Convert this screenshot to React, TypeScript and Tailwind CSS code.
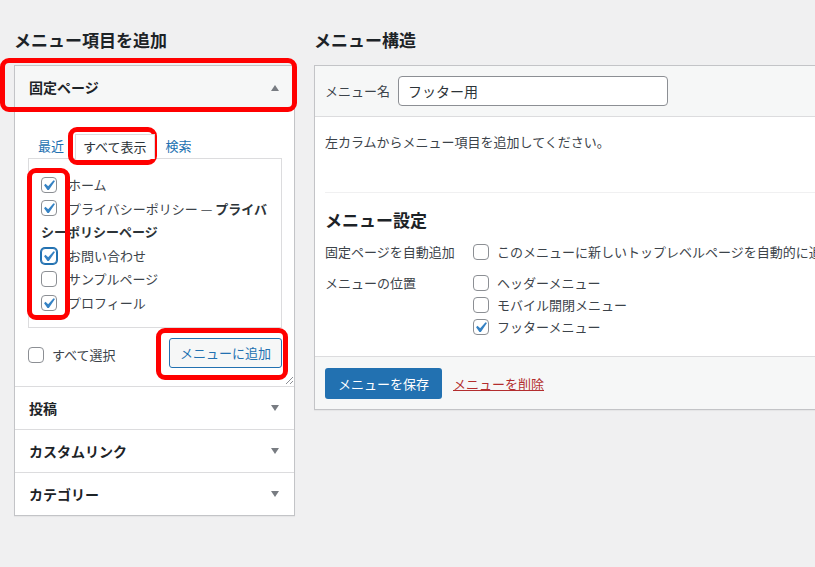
import type { ReactNode } from 'react'

function Check({ checked = false, focus = false }: { checked?: boolean; focus?: boolean }) {
  return (
    <span
      className={`relative inline-block h-4 w-4 shrink-0 rounded-[4px] border bg-white ${
        focus ? 'border-[#2271b1] shadow-[0_0_0_1px_#2271b1]' : 'border-[#8c8f94]'
      }`}
    >
      {checked ? (
        <svg viewBox="0 0 20 20" className="absolute -left-[4px] -top-[3px] h-[21px] w-[21px]" aria-hidden>
          <path d="M14.83 4.89l1.34.94-5.81 8.38H9.02L5.78 9.67l1.34-1.25 2.57 2.4z" fill="#3582c4" />
        </svg>
      ) : null}
    </span>
  )
}

function Arrow({ up = false }: { up?: boolean }) {
  return (
    <svg width="8" height="6" viewBox="0 0 8 6" aria-hidden>
      <path d={up ? 'M0 6 4 0 8 6z' : 'M0 0 8 0 4 6z'} fill="#787c82" />
    </svg>
  )
}

function Item({ checked, focus, children }: { checked?: boolean; focus?: boolean; children: ReactNode }) {
  return (
    <div className="flex h-[23.6px] items-center">
      <Check checked={checked} focus={focus} />
      <span className="ml-[11px] whitespace-nowrap">{children}</span>
    </div>
  )
}

function Section({ title }: { title: string }) {
  return (
    <div className="flex h-[43px] items-center justify-between border-t border-[#dcdcde] pl-[14px] pr-[15px]">
      <span className="text-[14px] font-semibold text-[#1d2327]">{title}</span>
      <Arrow />
    </div>
  )
}

function Mark({ className }: { className: string }) {
  return <div className={`pointer-events-none absolute rounded-[9px] border-[5px] border-[#ff0000] ${className}`} />
}

export default function App() {
  return (
    <div className="relative flex h-[567px] w-[815px] gap-[19px] overflow-hidden bg-[#f0f0f1] pl-[14px] font-['Noto_Sans_CJK_JP','Noto_Sans',sans-serif] text-[13px] text-[#3c434a]">
      {/* left column */}
      <div className="w-[281px] shrink-0">
        <h2 className="mt-[28px] h-[24px] text-[17px] font-bold leading-[24px] text-[#1d2327]">メニュー項目を追加</h2>
        <div className="mt-[13px] border border-[#c3c4c7] bg-white shadow-[0_1px_1px_rgba(0,0,0,0.04)]">
          <div className="flex h-[43px] items-center justify-between bg-[#f6f7f7] pl-[14px] pr-[15px]">
            <span className="text-[14px] font-semibold text-[#1d2327]">固定ページ</span>
            <Arrow up />
          </div>

          <div className="relative pb-[18px] pl-[13px] pr-[12px] pt-[25px]">
            <div className="flex h-[24px] items-end gap-[11px] pl-[10px] leading-[24px]">
              <span className="text-[#2271b1]">最近</span>
              <span className="relative z-10 -mb-px h-[25px] border border-b-0 border-[#dcdcde] bg-white px-[7px] text-[#2c3338]">
                すべて表示
              </span>
              <span className="text-[#2271b1]">検索</span>
            </div>

            <div className="h-[170px] border border-[#dcdcde] bg-white pl-[12px] pt-[14px]">
              <Item checked>ホーム</Item>
              <Item checked>
                プライバシーポリシー — <strong className="font-semibold text-[#2c3338]">プライバ</strong>
              </Item>
              <div className="flex h-[23.6px] items-center font-semibold text-[#2c3338]">シーポリシーページ</div>
              <Item checked focus>
                お問い合わせ
              </Item>
              <Item>サンプルページ</Item>
              <Item checked>プロフィール</Item>
            </div>

            <div className="mt-[10px] flex h-[30px] items-center justify-between">
              <label className="mt-[4px] flex items-center gap-[8px]">
                <Check />
                すべて選択
              </label>
              <button
                type="button"
                className="h-[30px] w-[113px] rounded-[3px] border border-[#2271b1] bg-[#f6f7f7] text-[13px] text-[#2271b1]"
              >
                メニューに追加
              </button>
            </div>

            <svg className="absolute bottom-[2px] right-[1px]" width="8" height="8" viewBox="0 0 8 8" aria-hidden>
              <path d="M8 1 1 8M8 5 5 8" stroke="#8c8f94" strokeWidth="1" />
            </svg>
          </div>

          <Section title="投稿" />
          <Section title="カスタムリンク" />
          <Section title="カテゴリー" />
        </div>
      </div>

      {/* right column */}
      <div className="min-w-0 flex-1">
        <h2 className="mt-[28px] h-[24px] text-[17px] font-bold leading-[24px] text-[#1d2327]">メニュー構造</h2>
        <div className="mt-[13px] w-[640px] border border-[#c3c4c7] bg-white shadow-[0_1px_1px_rgba(0,0,0,0.04)]">
          <div className="flex h-[51px] items-start gap-[8px] border-b border-[#dcdcde] bg-[#f6f7f7] pl-[10px] pt-[10px]">
            <span className="leading-[30px]">メニュー名</span>
            <div className="flex h-[30px] w-[270px] items-center rounded-[4px] border border-[#8c8f94] bg-white pl-[9px] text-[14px] text-[#2c3338]">
              フッター用
            </div>
          </div>

          <div className="px-[10px] pb-[18px] pt-[15px]">
            <p className="leading-[20px]">左カラムからメニュー項目を追加してください。</p>
            <div className="mt-[40px] border-t border-[#f0f0f1]" />
            <h3 className="mt-[15px] text-[17px] font-bold leading-[24px] text-[#1d2327]">メニュー設定</h3>

            <div className="mt-[9px] flex">
              <span className="w-[148px] shrink-0 leading-[22px]">固定ページを自動追加</span>
              <div className="flex h-[22px] items-center gap-[8px] whitespace-nowrap">
                <Check />
                このメニューに新しいトップレベルページを自動的に追加
              </div>
            </div>

            <div className="mt-[9px] flex">
              <span className="w-[148px] shrink-0 leading-[22px]">メニューの位置</span>
              <div>
                <div className="flex h-[22px] items-center gap-[8px]">
                  <Check />
                  ヘッダーメニュー
                </div>
                <div className="flex h-[22px] items-center gap-[8px]">
                  <Check />
                  モバイル開閉メニュー
                </div>
                <div className="flex h-[22px] items-center gap-[8px]">
                  <Check checked />
                  フッターメニュー
                </div>
              </div>
            </div>
          </div>

          <div className="flex h-[53px] items-start gap-[11px] border-t border-[#dcdcde] bg-[#f6f7f7] pl-[10px] pt-[11px]">
            <button type="button" className="h-[31px] w-[117px] rounded-[3px] bg-[#2271b1] text-[13px] text-white">
              メニューを保存
            </button>
            <span className="leading-[31px] text-[#b32d2e] underline">メニューを削除</span>
          </div>
        </div>
      </div>

      {/* annotation marks */}
      <Mark className="left-0 top-[58px] h-[54px] w-[297px]" />
      <Mark className="left-[68px] top-[127px] h-[38px] w-[89px]" />
      <Mark className="left-[27px] top-[168px] h-[152px] w-[43px]" />
      <Mark className="left-[156px] top-[328px] h-[52px] w-[132px]" />
    </div>
  )
}
